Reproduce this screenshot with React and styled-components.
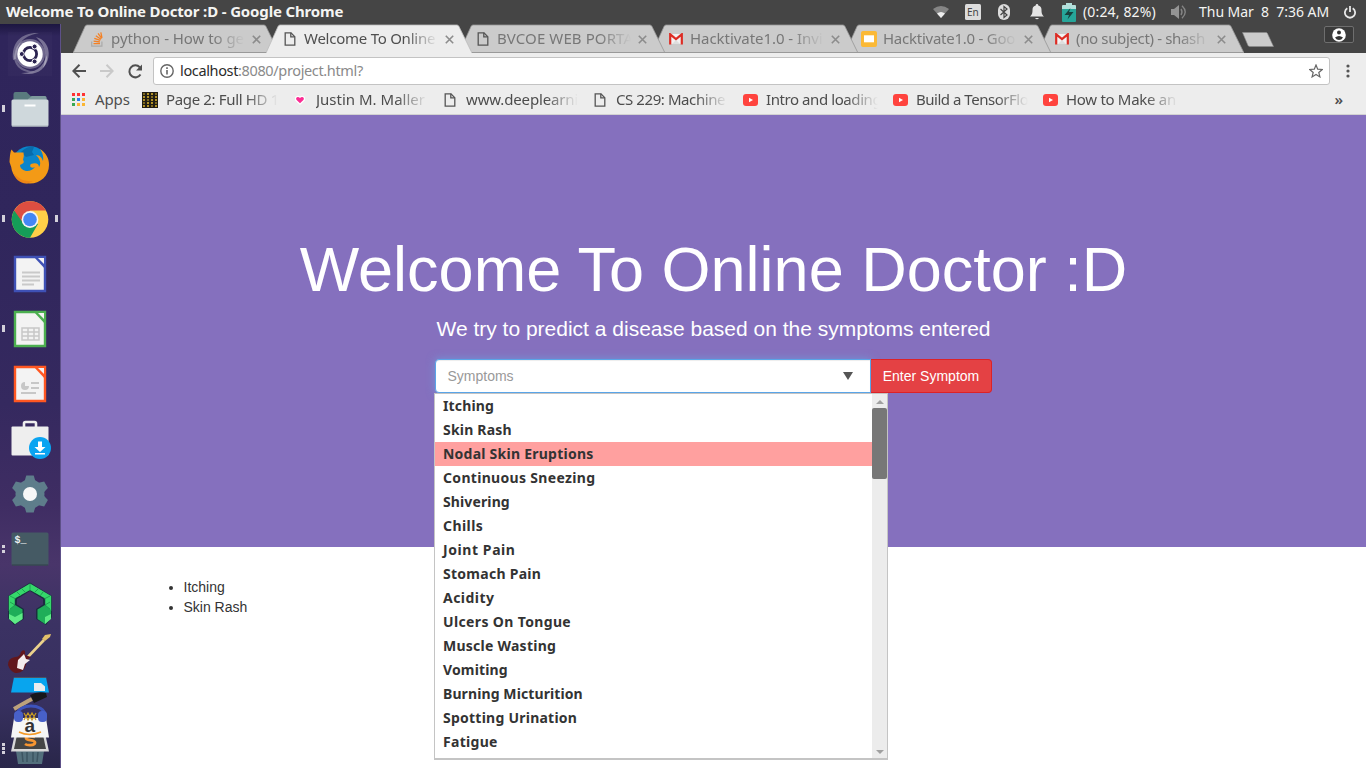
import React from "react";
import styled, { createGlobalStyle, css } from "styled-components";

const ui = `"Noto Sans", "Open Sans", sans-serif`;
const page = `"Liberation Sans", Arial, sans-serif`;

const Global = createGlobalStyle`
  * { box-sizing: border-box; }
  html, body { margin: 0; padding: 0; overflow: hidden; }
  svg { display: block; flex: none; }
`;

const Desktop = styled.div`
  width: 1366px; height: 768px; display: flex; flex-direction: column;
  overflow: hidden; font-family: ${ui}; background: #fff;
`;

/* ---------- top panel ---------- */
const Panel = styled.header`
  height: 24px; flex: none; display: flex; justify-content: space-between;
  align-items: center; padding: 0 10px 0 6px; background: #454545; color: #f4f4f2;
`;
const Title = styled.div`
  font-size: 15px; font-weight: 700; white-space: pre; line-height: 22px; padding-bottom: 2px;
  letter-spacing: -0.15px;
`;
const Tray = styled.div`display: flex; align-items: center; height: 24px;`;
const TrayIcon = styled.span`
  display: flex; align-items: center; justify-content: center;
  width: ${p => p.$w}px; margin-right: ${p => p.$gap || 0}px; height: 24px;
`;
const TrayText = styled.span`
  font-size: 14px; line-height: 24px; white-space: pre; width: ${p => p.$w}px;
  margin-right: ${p => p.$gap}px; letter-spacing: ${p => p.$ls || 0}px;
`;

/* ---------- launcher ---------- */
const Body = styled.div`flex: 1; display: flex; min-height: 0;`;
const Launcher = styled.nav`
  width: 61px; flex: none; display: flex; flex-direction: column;
  padding-top: 2px; overflow: hidden; border-right: 1px solid #5d5088;
  background: linear-gradient(180deg, #1c1640 0, #2f255b 12px, #30265c 200px, #35295f 380px,
    #3f2d63 480px, #49356a 540px, #3b3263 600px, #37305f 680px, #292649 744px);
`;
const LaunchItem = styled.div`
  height: 55px; flex: none; display: flex; align-items: center;
  justify-content: space-between;
`;
const Pips = styled.span`
  width: 7px; display: flex; flex-direction: column; gap: 2px; align-items: center;
`;
const Pip = styled.i`width: 3px; height: ${p => p.$h}px; background: #d3d0da;`;
const Stack = styled.div`height: 140px; display: flex; justify-content: space-between; flex: none;`;
const StackPips = styled(Pips)`padding-top: 112px; gap: 1px;`;

/* ---------- browser ---------- */
const Browser = styled.main`flex: 1; min-width: 0; display: flex; flex-direction: column;`;
const TabStrip = styled.div`
  height: 29px; flex: none; background: #454545; display: flex; padding-left: 12px; isolation: isolate;
`;
const TabBox = styled.div`
  width: 206px; margin-right: -13px; height: 29px; flex: none; position: relative;
  z-index: ${p => p.$z}; display: flex; align-items: center;
  padding: 1px 0 0 16px; color: ${p => (p.$active ? "#4f4f4f" : "#777")};
`;
const TabShape = styled.svg`position: absolute; left: 0; top: 0; z-index: -1;`;
const IconSlot = styled.span`
  width: 16px; height: 16px; flex: none; display: flex; align-items: center; justify-content: center;
`;
const fade = css`
  overflow: hidden; white-space: pre;
  mask-image: linear-gradient(90deg, #000 calc(100% - 32px), transparent);
`;
const TabText = styled.span`
  width: 134px; margin: 0 7px 0 6px; font-size: 15px; line-height: 21px; padding-bottom: 2px; ${fade}
  letter-spacing: ${p => p.$ls}px;
`;
const NewTab = styled.svg`margin: 7px 0 0 10px;`;
const Profile = styled.div`
  width: 30px; height: 17px; margin: 2px 12px 0 auto; border: 1px solid #6e6e6e; border-radius: 2px;
  background: #3b3b3b; display: flex; align-items: center; justify-content: center;
`;
const Toolbar = styled.div`
  height: 36px; flex: none; background: #ededed; display: flex; align-items: center;
  padding: 0 10px 0 10px;
`;
const NavButton = styled.span`
  width: 16px; height: 16px; margin-right: 12px; display: flex; align-items: center; justify-content: center;
`;
const Omnibox = styled.div`
  width: 1177px; height: 28px; margin-left: -2px; background: #fff; border: 1px solid #c3c3c3; border-radius: 3px;
  display: flex; align-items: center; padding: 0 6px 0 6px; font-size: 14.5px; color: #8a8a8a;
`;
const Url = styled.span`flex: 1; padding: 0 0 2px 6px; line-height: 22px; letter-spacing: -0.36px;`;
const Host = styled.span`color: #2b2b2b;`;
const MenuDots = styled.svg`margin-left: 16px;`;
const Bookmarks = styled.div`
  height: 26px; flex: none; background: #ededed; border-bottom: 1px solid #d2d2d2; display: flex;
  align-items: center; padding: 0 23px 3px 10px; font-size: 15px; color: #4d4d4d;
`;
const Bookmark = styled.div`
  width: ${p => p.$w || 136}px; margin-right: 14px; display: flex; align-items: center; gap: 8px; flex: none;
`;
const BookmarkText = styled.span`
  flex: 1; line-height: 20px; padding-bottom: 2px; ${fade} letter-spacing: ${p => p.$ls || 0}px;
  ${p => p.$full && css`mask-image: none; overflow: visible;`}
`;
const More = styled.span`margin-left: auto; font-size: 15px; line-height: 18px; font-weight: 600; padding-bottom: 2px;`;

/* ---------- page ---------- */
const Hero = styled.section`
  height: 432px; flex: none; background: #8570be; color: #fff; font-family: ${page};
  display: flex; flex-direction: column; align-items: center; padding-top: 120px;
`;
const Heading = styled.h1`margin: 0; font-size: 63px; line-height: 69px; font-weight: 400; white-space: nowrap;`;
const Lead = styled.p`margin: 10px 0 15px; font-size: 21px; line-height: 30px; font-weight: 300; white-space: nowrap;`;
const Form = styled.div`
  width: 557px; height: 34px; display: flex; position: relative; font-size: 14px;
`;
const Field = styled.div`
  width: 436px; height: 34px; background: #fff; border: 1px solid #5aa5e8; border-radius: 4px 0 0 4px;
  padding: 0 17px 0 11.5px; display: flex; align-items: center; justify-content: space-between; color: #999;
  box-shadow: inset 0 1px 1px rgba(0,0,0,.075), 0 0 8px rgba(102,175,233,.6);
`;
const Submit = styled.div`
  width: 121px; height: 34px; background: #e44144; border: 1px solid #dc2228; border-left: 0; border-radius: 0 4px 4px 0;
  line-height: 32px; text-align: center; color: #fff;
`;
const Menu = styled.div`
  position: absolute; left: -1px; top: 34px; width: 454px; height: 367px; z-index: 5; display: flex;
  background: #fff; border: 1px solid #c4c4c4; border-bottom-width: 2px; font-family: ${ui};
`;
const Options = styled.div`flex: 1; overflow: hidden;`;
const Option = styled.div`
  height: 24px; line-height: 24px; padding-left: 8px; font-size: 14px; font-weight: 700; color: #333;
  background: ${p => (p.$hot ? "#ffa09f" : "transparent")}; letter-spacing: ${p => p.$ls || 0}px;
`;
const Scroll = styled.div`
  width: 15px; background: #ececec; display: flex; flex-direction: column; align-items: center; padding: 6px 0 4px;
`;
const Thumb = styled.div`width: 15px; height: 71px; margin: 4px 0 auto; background: #777; border-radius: 2px;`;
const Results = styled.ul`
  margin: 30px 0 0 82.5px; padding-left: 40px; font: 14px/20px ${page}; color: #333;
`;

/* ---------- icons ---------- */
const FileIcon = () => (
  <svg width="12" height="14" viewBox="0 0 12 14" fill="none" stroke="#555" strokeWidth="1.3">
    <path d="M1.2 .8h5.8l3.8 3.9v8.5H1.2z" /><path d="M6.8 .8v4.1h4" />
  </svg>
);
const Gmail = () => (
  <svg width="14" height="12" viewBox="0 0 14 12">
    <path d="M1 1h12v10H1z" fill="#f2f2f2" /><path d="M3 11l4-4 4 4z" fill="#dedede" />
    <path d="M1.2 11.5V1.3L7 6l5.8-4.7v10.2" fill="none" stroke="#dd2c24" strokeWidth="2.2" />
  </svg>
);
const Slides = () => (
  <svg width="16" height="16" viewBox="0 0 16 16"><rect width="16" height="16" rx="2" fill="#fbb936" /><path d="M3 4.3h10v7H3z" fill="#fff" /></svg>
);
const Stacko = () => (
  <svg width="12" height="15" viewBox="0 0 12 15" fill="none">
    <path d="M.7 9.5v4.6h10.2V9.5" stroke="#aaa" strokeWidth="1.2" />
    <path d="M2.5 11.7H9M2.6 9.2l6.3.8M3.3 6.4l6 2M4.8 3.7l5.2 3.6M7 1.4l3.7 5M9.8.3l1.2 5.6" stroke="#f48024" strokeWidth="1.3" />
  </svg>
);
const Youtube = () => (
  <svg width="15" height="12" viewBox="0 0 15 12"><rect width="15" height="12" rx="3" fill="#ff443e" /><path d="M6 3.8L10 6 6 8.2z" fill="#fff" /></svg>
);
const Heart = () => (
  <svg width="10" height="10" viewBox="0 0 10 10"><path d="M5 9L1.200 5.500C-.8 3 2.500 0 5 2.400 7.500 0 10.800 3 8.800 5.500z" fill="#fff" stroke="#fff" strokeWidth="1.400" /><path d="M5 8.300L1.600 5C0 3.200 2.500.8 5 3 7.500.8 10 3.200 8.400 5z" fill="#fb2d93" /></svg>
);
const AppsGrid = () => (
  <svg width="14" height="14" viewBox="0 0 14 14">
    {["#f33", "#f33", "#f33", "#37a853", "#2b7de9", "#fbb634", "#37a853", "#fbb634", "#fbb634"].map((c, i) => (
      <rect key={i} x={(i % 3) * 5} y={Math.floor(i / 3) * 5} width="3" height="3" fill={c} />
    ))}
  </svg>
);
const GridIcon = () => (
  <svg width="16" height="16" viewBox="0 0 16 16">
    <rect width="16" height="16" fill="#221e13" />
    {Array.from({ length: 20 }, (_, i) => (
      <rect key={i} x={1 + (i % 4) * 4} y={1 + Math.floor(i / 4) * 3} width="2" height="2" fill={i % 3 ? "#b29226" : "#7d671f"} />
    ))}
  </svg>
);
const Close = () => (
  <svg width="9" height="9" viewBox="0 0 9 9" stroke="#8c8c8c" strokeWidth="1.6"><path d="M.8 .8l7.4 7.4M8.2 .8L.8 8.2" /></svg>
);
const Arrow = ({ c, flip }) => (
  <svg width="14" height="14" viewBox="0 0 14 14" fill="none" stroke={c} strokeWidth="2">
    <path d={flip ? "M0 7h12.5M6.5 .8L12.7 7l-6.2 6.2" : "M14 7H1.5M7.5 .8L1.3 7l6.2 6.2"} />
  </svg>
);

const Wrap = ({ children, h = 44 }) => <svg width="44" height={h} viewBox={`0 0 44 ${h}`}>{children}</svg>;
const Doc = ({ c, children }) => (
  <Wrap>
    <path d="M7 5h30v34H7z" fill="#f3f3f3" stroke={c} strokeWidth="2.4" />
    <path d="M25 4h13v14z" fill={c} /><path d="M30 6h6v6z" fill="#f3f3f3" />
    {children}
  </Wrap>
);
const Dash = () => (
  <Wrap>
    <rect width="44" height="44" fill="#fff" opacity=".02" />
    <g fill="#fff">
      <path opacity=".3" d="M5 28C3 9 15 0 31 1 13 4 9 14 8 27z" />
      <path opacity=".35" d="M28 5c15 4 16 22 7 31 4-13 3-22-7-31z" />
      <path opacity=".35" d="M39 23c1 15-12 22-26 18 14 0 22-5 26-18z" />
      <path opacity=".28" d="M6 20C4 35 16 42 27 40 14 38 8 33 6 20z" />
      <circle cx="22" cy="22" r="15" opacity=".3" /><circle cx="22" cy="22" r="12.7" />
    </g>
    <circle cx="22" cy="22" r="6.6" fill="none" stroke="#2b2350" strokeWidth="2.8" />
    <g fill="#2b2350" stroke="#fff" strokeWidth="1"><circle cx="13.8" cy="22" r="2.5" /><circle cx="26.6" cy="14.5" r="2.5" /><circle cx="26.6" cy="29.5" r="2.5" /></g>
  </Wrap>
);
const Folder = () => (
  <Wrap>
    <path d="M5.5 16V7q0-2 2-2h11l4 4h14q2 0 2 2v7z" fill="#597a7e" />
    <path d="M20 12l4-3h12.500q2 0 2 2v4H20z" fill="#7e999c" />
    <rect x="3.500" y="12.500" width="37" height="27" rx="1.500" fill="#cfd8dc" /><rect x="16.500" y="17.500" width="11" height="2" fill="#fff" />
    <path d="M4 39h36" stroke="#a9b3ba" />
  </Wrap>
);
const Firefox = () => (
  <Wrap>
    <circle cx="22" cy="22.500" r="18.300" fill="#0a85cb" />
    <path d="M13 10q6-6 13-5l-2 5 2 3-8 2z" fill="#086cab" />
    <path d="M1.500 20C2 14 2 11 3.500 7.500L6 10.500h9.500q1 4-.5 7.500c2 2 0 4-3 5 0 6 10 9 15 2-4 2-6-1-4-3 5-2 8 0 8 3 3-4 0-9-3-12 4 0 6 3 7 6 1-5-1-9-3-12 6 4 9 9 9 16 0 11-9 18.500-19 18.500C12 41.500 4 34 3.200 25z" fill="#f39a16" />
    <path d="M5 30c5 7 12 10 20 9-8 6-18 0-20-9z" fill="#ee8615" />
  </Wrap>
);
const Chrome = () => (
  <Wrap>
    <circle cx="22" cy="22.500" r="18.300" fill="#ffcf48" />
    <path d="M6.200 13.400A18.300 18.300 0 0 0 22 40.800l8-13.700L22 22.500z" fill="#159d58" />
    <path d="M14 24.500L6.200 13.400A18.300 18.300 0 0 1 38 13.500H22z" fill="#dc4e41" />
    <circle cx="22" cy="22.500" r="8.400" fill="#f4f4f4" /><circle cx="22" cy="22.500" r="6.800" fill="#4487f4" />
  </Wrap>
);
const Bag = () => (
  <Wrap>
    <path d="M16 10V6.500q0-1.500 1.500-1.500h9q1.500 0 1.500 1.500V10" fill="none" stroke="#eee" strokeWidth="2.600" />
    <rect x="3.500" y="9.500" width="37" height="29" rx="1" fill="#eee" />
    <circle cx="32" cy="31" r="11" fill="#0aa4f1" />
    <path d="M30 24.500h4V30h3.500L32 35l-5.500-5H30zM27 36h10v1.500H27z" fill="#fff" />
  </Wrap>
);
const Gear = () => (
  <Wrap>
    <g fill="#5e7d8b">
      <circle cx="22" cy="22" r="14.500" />
      {[0, 60, 120, 180, 240, 300].map(a => <path key={a} transform={`rotate(${a} 22 22)`} d="M18.300 3.500h7.400l2 6.500H16.300z" />)}
    </g>
    <circle cx="22" cy="22" r="7" fill="#f7f7f7" />
  </Wrap>
);
const TermText = styled.text`font: 700 10px "Liberation Mono", monospace;`;
const Terminal = () => (
  <Wrap><rect x="3.500" y="5.500" width="37" height="33" rx="1.500" fill="#455a64" /><path d="M4 38h36" stroke="#304048" /><TermText x="6.500" y="16" fill="#edf1f2">$_</TermText></Wrap>
);
const Arch = () => (
  <Wrap>
    <path d="M0 14L22 .5 44 14v21l-6 8-10-6v-10l7-4.500V17l-13-8-13 8v5.500l7 4.500v10L6 43l-6-7z" fill="#1c2d40" />
    <path d="M.8 14L22 1.500 43.200 14v15l-6 3V16.500L22 8 6.800 16.500V32l-6-3z" fill="#35d86b" />
    <path d="M1 28l6-5 7.500 4.500V37L7 42l-6-6zM43 28l-6-5-7.500 4.500V37l7.500 5 6-6z" fill="#1fae59" />
    <path d="M1 32l6 3 7.500-4v6L7 42l-6-5zM43 32l-6 3v7l6-5z" fill="#5feb86" />
    <path d="M2 20l5 3-5 4M2 14l6 3M9 10l4 4M14 7l4 4M22 2v7M30 7l-4 4M35 10l-3 4M42 14l-6 3M42 20l-5 3 5 4" fill="none" stroke="#1c934b" strokeWidth=".8" />
  </Wrap>
);
const AmazonText = styled.text`font: 700 19px ${page};`;
const Pile = () => (
  <Wrap h={140}>
    <path d="M17 29L36 9" stroke="#ecd28c" strokeWidth="2.600" />
    <path d="M34 8l3-4 6-1-1 3-5 4z" fill="#e2bf6a" />
    <path d="M0 34q0-7 7-8 5 0 6-5 2-3 4-1l0 4 6 2q-5 3-5 8-3 9-11 8-5-2-7-8z" fill="#62171c" />
    <path d="M10 29l6-6 2 5 4 1-5 4-2 6-6-2z" fill="#f4eded" />
    <path d="M6 46h32l3 15.500H3z" fill="#08a5ee" /><path d="M6 46.500h32" stroke="#4e5361" />
    <path d="M26 52h7l4 3.500V60H26z" fill="#e8ecee" />
    <path d="M6 78l14-8 8-4" stroke="#bda27c" strokeWidth="4" fill="none" /><path d="M22 64q8-4 16-2l1 4-13 6z" fill="#17171b" />
    <path d="M8 120h28l-2 13H10z" fill="#536f7c" /><path d="M14 121l1 10M19 121v10M25 121v10M30 121l-1 10" stroke="#3d5562" strokeWidth="1.500" />
    <path d="M7 102h30l4 18.500H3z" fill="#d8d8d8" /><path d="M9 104h26l3 14H6z" fill="#454545" />
    <path d="M27 106q-9-2-9 1c0 3 9 1 9 4.500s-8 3-10 1.500" fill="none" stroke="#f79631" strokeWidth="2.800" />
    <path d="M6 87h32l3 19.500H3z" fill="#f6f6f6" />
    <AmazonText x="16.500" y="101" fill="#333">a</AmazonText>
    <path d="M11 101q10 5 22 0" fill="none" stroke="#f49a28" strokeWidth="1.500" />
    <path d="M9 84c1-12 27-12 28 0" fill="none" stroke="#3d53bb" strokeWidth="3" />
    <rect x="6" y="80" width="9" height="11" rx="4" fill="#4860c8" /><rect x="30" y="80" width="9" height="11" rx="4" fill="#4860c8" />
    <path d="M16 89l4-7 4 7 4-7M16 82l4 7 4-7 4 7" fill="none" stroke="#c89c24" strokeWidth="1.200" />
  </Wrap>
);

const Writer = () => <Doc c="#3f51b5"><path d="M14 20.500h18M14 24.500h18M14 28.500h18M14 32.500h12" stroke="#c9c9c9" strokeWidth="1.900" /></Doc>;
const Calc = () => <Doc c="#4caf50"><path d="M14 21h17v12H14zM14 25h17M14 29h17M20 21v12M26 21v12" fill="none" stroke="#c7c7c7" strokeWidth="1.500" /></Doc>;
const Impress = () => <Doc c="#ff5722"><path d="M17 20v4h4a4 4 0 1 1-4-4zM23 20h8v2h-8zM23 25h8v2h-8zM13 30h15v2H13z" fill="#c7c7c7" /></Doc>;

const launchers = [
  [Dash], [Folder, 1], [Firefox], [Chrome, 1, true], [Writer], [Calc, 1], [Impress],
  [Bag], [Gear], [Terminal, 2], [Arch],
];
const tabs = [
  ["python - How to ge", Stacko, -0.05], ["Welcome To Online", FileIcon, -0.25], ["BVCOE WEB PORTA", FileIcon, 0.1],
  ["Hacktivate1.0 - Invi", Gmail, -0.05], ["Hacktivate1.0 - Goo", Slides, -0.25], ["(no subject) - shash", Gmail, -0.35],
];
const marks = [
  ["Page 2: Full HD 1", GridIcon, -0.35], ["Justin M. Maller", Heart, 0], ["www.deeplearni", FileIcon, -0.15],
  ["CS 229: Machine", FileIcon, -0.42], ["Intro and loading", Youtube, -0.42], ["Build a TensorFlo", Youtube, -0.48], ["How to Make an", Youtube, -0.3],
];
const options = [
  ["Itching", 0.15], ["Skin Rash", 0.2], ["Nodal Skin Eruptions", 0.24], ["Continuous Sneezing", 0.32],
  ["Shivering", 0.12], ["Chills", 0.45], ["Joint Pain", 0.58], ["Stomach Pain", 0.27], ["Acidity", 0.45],
  ["Ulcers On Tongue", 0.36], ["Muscle Wasting", 0.25], ["Vomiting", 0.15], ["Burning Micturition", 0.1],
  ["Spotting Urination", 0.24], ["Fatigue", 0.3],
];

function Tab({ label, Icon, ls, active, z }) {
  return (
    <TabBox $active={active} $z={z}>
      <TabShape width="206" height="29">
        <path d="M0 29L12 2.500q.7-1.500 2-1.500H191q1.300 0 2 1.500L206 29z" fill={active ? "#ededed" : "#cbcbcb"} />
        <path d="M0 29L12 2.500q.7-1.500 2-1.500H191q1.300 0 2 1.500L206 29" fill="none" stroke={active ? "#bbb" : "#979797"} strokeWidth=".8" />
        {!active && <path d="M0 28.500h206" stroke="#999" />}
      </TabShape>
      <IconSlot><Icon /></IconSlot>
      <TabText $ls={ls}>{label}</TabText>
      <Close />
    </TabBox>
  );
}

export default function App() {
  return (
    <Desktop>
      <Global />
      <Panel>
        <Title>Welcome To Online Doctor :D - Google Chrome</Title>
        <Tray>
          <TrayIcon $w={18} $gap={15}>
            <svg width="16" height="12" viewBox="0 0 16 12"><path d="M0 3q8-6 16 0L8 12z" fill="#858585" /><path d="M4 7.500q4-3 8 0L8 12z" fill="#eee" /></svg>
          </TrayIcon>
          <TrayIcon $w={16} $gap={17}>
            <svg width="16" height="16" viewBox="0 0 16 16"><rect width="16" height="16" rx="1.500" fill="#dcdcdc" /><text x="2" y="12" fontSize="10" fontFamily="Noto Sans" fill="#444">En</text></svg>
          </TrayIcon>
          <TrayIcon $w={12} $gap={20}>
            <svg width="12" height="16" viewBox="0 0 12 16"><rect width="12" height="16" rx="6" fill="#dcdcdc" /><path d="M2.500 5l6.500 6-3 2.500v-11L9 5l-6.500 6" fill="none" stroke="#444" strokeWidth="1.200" /></svg>
          </TrayIcon>
          <TrayIcon $w={14} $gap={18}>
            <svg width="14" height="16" viewBox="0 0 14 16"><path d="M7 0q1.300 0 1.300 1.400C11 2 11.500 4 11.500 6c0 4 1 5 2.500 6.500H0C1.500 11 2.500 10 2.500 6c0-2 .5-4 3.200-4.600Q5.700 0 7 0zM5 14h4q-2 2.500-4 0z" fill="#e4e4e4" /></svg>
          </TrayIcon>
          <TrayIcon $w={14} $gap={7}>
            <svg width="14" height="19" viewBox="0 0 14 19"><path d="M4 0h6v2h3q1 0 1 1v4H0V3q0-1 1-1h3z" fill="#b2dfdb" /><path d="M0 6h14v12q0 1-1 1H1q-1 0-1-1z" fill="#26a69a" /><path d="M8.500 5L2.500 12H7l-1.500 4.500L11.500 9H7z" fill="#17423f" /></svg>
          </TrayIcon>
          <TrayText $w={75} $gap={13} $ls={0.15}>(0:24, 82%)</TrayText>
          <TrayIcon $w={16} $gap={12}>
            <svg width="16" height="14" viewBox="0 0 16 14"><path d="M0 4h3l5-4v14l-5-4H0z" fill="#949494" /><path d="M10 4q2 3 0 6M11 0.800q6.500 6.200 0 12.400" fill="none" stroke="#858585" strokeWidth="1.400" /></svg>
          </TrayIcon>
          <TrayText $w={130} $gap={15} $ls={-0.03}>Thu Mar  8  7:36 AM</TrayText>
          <TrayIcon $w={12}>
            <svg width="12" height="13" viewBox="0 0 12 13" fill="none" stroke="#e8e8e8" strokeWidth="1.800"><path d="M3.300 2.300a5.100 5.100 0 1 0 5.400 0M6 0v6" /></svg>
          </TrayIcon>
        </Tray>
      </Panel>
      <Body>
        <Launcher>
          {launchers.map(([Icon, pips = 0, current], i) => (
            <LaunchItem key={i}>
              <Pips>{Array.from({ length: pips }, (_, k) => <Pip key={k} $h={pips === 1 ? 7 : 3} />)}</Pips>
              <Icon />
              <Pips>{current && <Pip $h={7} />}</Pips>
            </LaunchItem>
          ))}
          <Stack>
            <StackPips><Pip $h={3} /><Pip $h={3} /><Pip $h={3} /></StackPips>
            <Pile />
            <Pips />
          </Stack>
        </Launcher>
        <Browser>
          <TabStrip>
            {tabs.map(([label, Icon, ls], i) => (
              <Tab key={label} label={label} Icon={Icon} ls={ls} active={i === 1} z={i === 1 ? 20 : 10 - i} />
            ))}
            <NewTab width="34" height="17"><path d="M1.500 1.500H25q1 0 1.500 1L32.500 15.500H9q-1.500 0-2-1z" fill="#cbcbcb" stroke="#8b8b8b" strokeWidth=".6" /></NewTab>
            <Profile><svg width="14" height="14" viewBox="0 0 14 14"><circle cx="7" cy="7" r="6.800" fill="#fff" /><circle cx="7" cy="4.600" r="2" fill="#333" /><path d="M3 9.500q4-3 8 0-1.500 2.500-4 2.500T3 9.500z" fill="#333" /></svg></Profile>
          </TabStrip>
          <Toolbar>
            <NavButton><Arrow c="#505050" /></NavButton>
            <NavButton><Arrow c="#c9c9c9" flip /></NavButton>
            <NavButton>
              <svg width="15" height="15" viewBox="0 0 15 15"><path d="M12.500 10.500A6 6 0 1 1 11.800 3.300" fill="none" stroke="#505050" strokeWidth="2" /><path d="M14 .5v6H8z" fill="#505050" /></svg>
            </NavButton>
            <Omnibox>
              <svg width="14" height="14" viewBox="0 0 14 14"><circle cx="7" cy="7" r="6.200" fill="none" stroke="#666" strokeWidth="1.400" /><path d="M6.200 6h1.600v4.500H6.200zM6.200 3.300h1.600v1.600H6.200z" fill="#666" /></svg>
              <Url><Host>localhost</Host>:8080/project.html?</Url>
              <svg width="14" height="14" viewBox="0 0 14 14"><path d="M7 1l1.700 4.200 4.600.3-3.500 3 1.100 4.400L7 10.500l-3.900 2.400 1.100-4.400-3.500-3 4.600-.3z" fill="none" stroke="#666" strokeWidth="1.200" /></svg>
            </Omnibox>
            <MenuDots width="4" height="14" viewBox="0 0 4 14" fill="#555"><circle cx="2" cy="2" r="1.600" /><circle cx="2" cy="7" r="1.600" /><circle cx="2" cy="12" r="1.600" /></MenuDots>
          </Toolbar>
          <Bookmarks>
            <Bookmark $w={57}><IconSlot><AppsGrid /></IconSlot><BookmarkText $full $ls={-0.1}>Apps</BookmarkText></Bookmark>
            {marks.map(([label, Icon, ls]) => (
              <Bookmark key={label}><IconSlot><Icon /></IconSlot><BookmarkText $ls={ls}>{label}</BookmarkText></Bookmark>
            ))}
            <More>»</More>
          </Bookmarks>
          <Hero>
            <Heading>Welcome To Online Doctor :D</Heading>
            <Lead>We try to predict a disease based on the symptoms entered</Lead>
            <Form>
              <Field>Symptoms<svg width="10" height="8"><path d="M0 0h10L5 8z" fill="#555" /></svg></Field>
              <Submit>Enter Symptom</Submit>
              <Menu>
                <Options>{options.map(([name, ls], i) => <Option key={name} $hot={i === 2} $ls={ls}>{name}</Option>)}</Options>
                <Scroll>
                  <svg width="8" height="4"><path d="M0 4h8L4 0z" fill="#a0a0a0" /></svg>
                  <Thumb />
                  <svg width="8" height="4"><path d="M0 0h8L4 4z" fill="#a0a0a0" /></svg>
                </Scroll>
              </Menu>
            </Form>
          </Hero>
          <Results><li>Itching</li><li>Skin Rash</li></Results>
        </Browser>
      </Body>
    </Desktop>
  );
}
